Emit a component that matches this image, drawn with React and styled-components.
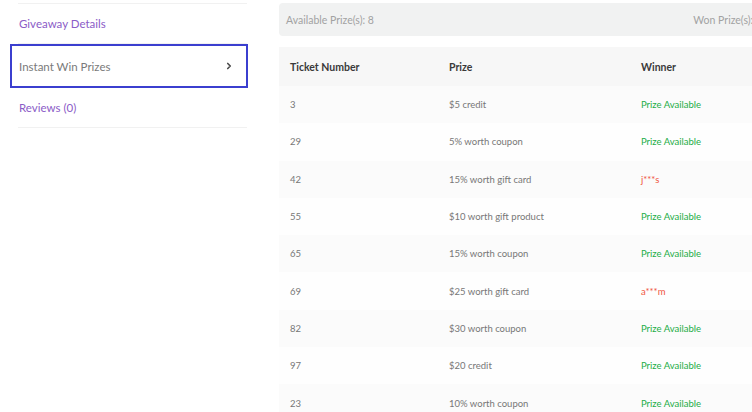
import React from 'react';
import styled, { createGlobalStyle } from 'styled-components';
import { ChevronRight } from 'lucide-react';

// Styles
//----------------------------------------------------------------------------------//

const GlobalStyle = createGlobalStyle`
    body {
        margin: 0;
        background: #fff;
        font-family: Lato, 'Liberation Sans', sans-serif;
    }
`;

const Page = styled.div`
    display: flex;
    align-items: flex-start;
    gap: 32px;
    padding: 3px 0 0 10px;
    width: 752px;
    height: 412px;
    box-sizing: border-box;
    overflow: hidden;
`;

const Sidebar = styled.ul`
    list-style: none;
    margin: 0 0 0 8px;
    padding: 0;
    width: 229px;
    flex-shrink: 0;
    border-top: 1px solid #f1f1f1;
`;

const NavItem = styled.li`
    display: flex;
    align-items: center;
    justify-content: space-between;
    box-sizing: border-box;
    height: ${p => (p.$active ? '44px' : '40px')};
    padding: ${p => (p.$active ? '0 12px 0 7px' : '0 0 0 1px')};
    margin: ${p => (p.$active ? '0 -1px 0 -8px' : '0')};
    border: ${p => (p.$active ? '2px solid #3b3fcf' : 'none')};
    border-bottom: ${p => (p.$active ? '2px solid #3b3fcf' : '1px solid #f1f1f1')};
    font-size: 11.5px;
    color: ${p => (p.$active ? '#7a7a7a' : '#8b5cc7')};
`;

const Main = styled.div`
    display: flex;
    flex-direction: column;
    gap: 11px;
    width: 490px;
    flex-shrink: 0;
`;

const Summary = styled.div`
    display: flex;
    align-items: center;
    justify-content: space-between;
    height: 33px;
    padding: 0 7px;
    border-radius: 4px;
    background: #f1f2f2;
    font-size: 10.5px;
    color: #a2a2a2;
`;

const Table = styled.table`
    width: 100%;
    border-collapse: collapse;
    font-size: 9.5px;
    color: #777;
`;

const Th = styled.th`
    text-align: left;
    font-weight: 700;
    font-size: 10.5px;
    color: #3a3a3a;
    height: 39px;
    padding: 0 10px 0 11px;
    width: ${p => p.$w || 'auto'};
`;

const HeadRow = styled.tr`
    background: #f7f7f7;
`;

const Row = styled.tr`
    background: ${p => (p.$odd ? '#fbfbfb' : '#fefefe')};
`;

const Td = styled.td`
    height: 37.3px;
    padding: 0 10px 0 11px;
`;

const Winner = styled(Td)`
    color: ${p => (p.$won ? '#f0563f' : '#22ad46')};
`;

//----------------------------------------------------------------------------------//

const prizes = [
    { ticket: 3, prize: '$5 credit', winner: null },
    { ticket: 29, prize: '5% worth coupon', winner: null },
    { ticket: 42, prize: '15% worth gift card', winner: 'j***s' },
    { ticket: 55, prize: '$10 worth gift product', winner: null },
    { ticket: 65, prize: '15% worth coupon', winner: null },
    { ticket: 69, prize: '$25 worth gift card', winner: 'a***m' },
    { ticket: 82, prize: '$30 worth coupon', winner: null },
    { ticket: 97, prize: '$20 credit', winner: null },
    { ticket: 23, prize: '10% worth coupon', winner: null },
];

const App = () => {
    return (
        <Page>
            <GlobalStyle />
            <Sidebar>
                <NavItem>Giveaway Details</NavItem>
                <NavItem $active>
                    Instant Win Prizes
                    <ChevronRight size={10} strokeWidth={4} color="#4a4a4a" />
                </NavItem>
                <NavItem>Reviews (0)</NavItem>
            </Sidebar>
            <Main>
                <Summary>
                    <span>Available Prize(s): 8</span>
                    <span>Won Prize(s): 2</span>
                </Summary>
                <Table>
                    <thead>
                        <HeadRow>
                            <Th $w="138px">Ticket Number</Th>
                            <Th $w="171px">Prize</Th>
                            <Th>Winner</Th>
                        </HeadRow>
                    </thead>
                    <tbody>
                        {prizes.map((p, i) => (
                            <Row key={p.ticket} $odd={i % 2 === 0}>
                                <Td>{p.ticket}</Td>
                                <Td>{p.prize}</Td>
                                <Winner $won={!!p.winner}>{p.winner || 'Prize Available'}</Winner>
                            </Row>
                        ))}
                    </tbody>
                </Table>
            </Main>
        </Page>
    );
};

export default App;
